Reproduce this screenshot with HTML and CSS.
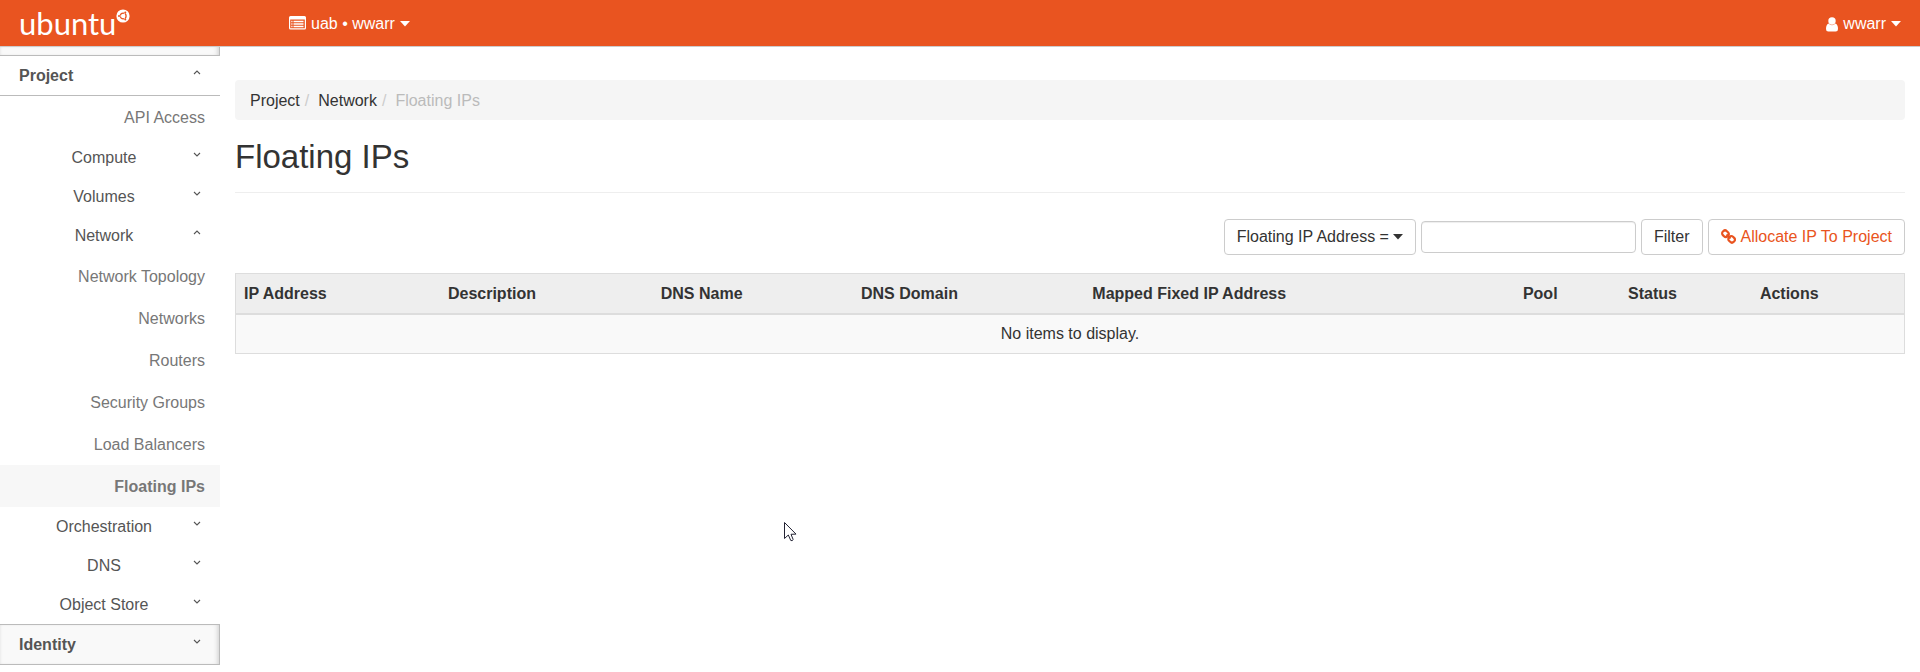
FILE: index.html
```html
<!DOCTYPE html>
<html lang="en">
<head>
<meta charset="utf-8">
<meta name="viewport" content="width=device-width, initial-scale=1">
<title>Floating IPs</title>
<link rel="stylesheet" href="styles.css">
</head>
<body>
<svg class="defs" aria-hidden="true">
  <symbol id="down" viewBox="0 0 8 5"><path d="M1 1l3 3 3-3" fill="none" stroke="currentColor" stroke-width="1.1"/></symbol>
  <symbol id="up" viewBox="0 0 8 5"><path d="M1 4l3-3 3 3" fill="none" stroke="currentColor" stroke-width="1.1"/></symbol>
  <symbol id="caret" viewBox="0 0 10 6"><path d="M0 0h10L5 5.5z" fill="currentColor"/></symbol>
</svg>
<header class="topbar">
  <a class="brand" href="#" aria-label="ubuntu"><span class="wordmark">ubuntu</span><svg class="circle" viewBox="0 0 14 14" aria-hidden="true"><circle cx="7" cy="7" r="6.6" fill="#fff"/><circle cx="7.2" cy="7" r="2.9" fill="none" stroke="#e95420" stroke-width="1.3"/><path d="M7.2 7H2M7.2 7l3-5M7.2 7l3 5" stroke="#fff" stroke-width=".8"/><g fill="#e95420"><circle cx="3" cy="7" r="1"/><circle cx="9.3" cy="3.4" r="1"/><circle cx="9.3" cy="10.6" r="1"/></g></svg></a>
  <button class="menu" type="button"><svg class="list-icon" viewBox="0 0 17 14" aria-hidden="true"><path fill="#fff" fill-rule="evenodd" d="M1.5 0h14Q17 0 17 1.5v10.500Q17 13.500 15.500 13.500h-14Q0 13.500 0 12V1.500Q0 0 1.500 0zM1.200 3.500v8.800h14.600V3.500z"/><path d="M2.300 5.500h1.200M4.500 5.500h10M2.300 8h1.200M4.500 8h10M2.300 10.500h1.200M4.500 10.500h10" stroke="#fff" stroke-width="1.400"/></svg><span>uab • wwarr</span><svg class="caret"><use href="#caret"/></svg></button>
  <button class="menu user" type="button"><svg class="user-icon" viewBox="0 0 12 15" aria-hidden="true"><g fill="#fff"><circle cx="6" cy="4" r="3.700"/><path d="M2.500 6.500Q6 10 9.500 6.500Q12 7.500 12 12q0 2.500-2.300 2.500H2.300Q0 14.500 0 12q0-4.500 2.500-5.500z"/></g></svg><span>wwarr</span><svg class="caret"><use href="#caret"/></svg></button>
</header>
<div class="layout">
  <nav class="sidebar" aria-label="Main">
    <div class="panel-end"></div>
    <button class="panel open" type="button"><span>Project</span><svg class="chevron"><use href="#up"/></svg></button>
    <a class="item" href="#">API Access</a>
    <button class="group" type="button"><span>Compute</span><svg class="chevron"><use href="#down"/></svg></button>
    <button class="group" type="button"><span>Volumes</span><svg class="chevron"><use href="#down"/></svg></button>
    <button class="group" type="button"><span>Network</span><svg class="chevron"><use href="#up"/></svg></button>
    <a class="item" href="#">Network Topology</a>
    <a class="item" href="#">Networks</a>
    <a class="item" href="#">Routers</a>
    <a class="item" href="#">Security Groups</a>
    <a class="item" href="#">Load Balancers</a>
    <a class="item active" href="#" aria-current="page">Floating IPs</a>
    <button class="group" type="button"><span>Orchestration</span><svg class="chevron"><use href="#down"/></svg></button>
    <button class="group" type="button"><span>DNS</span><svg class="chevron"><use href="#down"/></svg></button>
    <button class="group" type="button"><span>Object Store</span><svg class="chevron"><use href="#down"/></svg></button>
    <button class="panel" type="button"><span>Identity</span><svg class="chevron"><use href="#down"/></svg></button>
  </nav>
  <main class="content">
    <ol class="breadcrumb">
      <li><a href="#">Project</a></li>
      <li><a href="#">Network</a></li>
      <li class="current">Floating IPs</li>
    </ol>
    <h1 class="title">Floating IPs</h1>
    <form class="actions">
      <button class="btn filter-field" type="button"><span>Floating IP Address =</span><svg class="caret"><use href="#caret"/></svg></button>
      <input class="search" type="text" aria-label="Filter value">
      <button class="btn" type="button">Filter</button>
      <button class="btn allocate" type="button"><svg class="link-icon" viewBox="0 0 15 15" aria-hidden="true"><g fill="none" stroke="currentColor" stroke-width="2.200"><rect x="1.200" y="1.700" width="6.600" height="5.600" rx="2.500" transform="rotate(45 4.200 4.500)"/><rect x="7.200" y="7.700" width="6.600" height="5.600" rx="2.500" transform="rotate(45 10.800 10.500)"/><path d="M5.500 5.500l4 4"/></g></svg><span>Allocate IP To Project</span></button>
    </form>
    <table class="grid">
      <colgroup><col class="c-ip"><col class="c-desc"><col class="c-name"><col class="c-domain"><col class="c-fixed"><col class="c-pool"><col class="c-status"><col></colgroup>
      <thead><tr><th>IP Address</th><th>Description</th><th>DNS Name</th><th>DNS Domain</th><th>Mapped Fixed IP Address</th><th>Pool</th><th>Status</th><th>Actions</th></tr></thead>
      <tbody><tr><td colspan="8">No items to display.</td></tr></tbody>
    </table>
  </main>
</div>
<svg class="cursor" viewBox="0 0 13 20" aria-hidden="true"><path d="M.5.5v16l3.800-3.500 2.500 5.500q1.500.7 2.400-.9L7 12.300l5-.2z" fill="#fff" stroke="#223"/></svg>
</body>
</html>
```
FILE: styles.css
```css
* { box-sizing: border-box; }
body {
  margin: 0;
  background: #fff;
  color: #333;
  font: 16px/24px "Liberation Sans", Arial, sans-serif;
}
a { color: inherit; text-decoration: none; }
button, input { font: inherit; color: inherit; }
button { cursor: pointer; }
.defs { display: none; }

.topbar {
  display: flex;
  align-items: center;
  height: 47px;
  padding: 0 19px;
  background: #e95420;
  border-bottom: 1px solid #ccc;
  color: #fff;
}
.brand { display: flex; width: 270px; }
.wordmark { font: 31px/38px Lato, sans-serif; }
.circle { width: 14px; height: 14px; margin-top: 5px; }
.menu {
  display: flex;
  align-items: center;
  gap: 5px;
  padding: 2px 0 0;
  border: 0;
  background: none;
}
.user { margin-left: auto; }
.list-icon { width: 17px; height: 14px; margin-bottom: 2px; }
.user-icon { width: 12px; height: 15px; }
.caret { width: 10px; height: 6px; }

.layout { display: flex; }
.sidebar { flex: 0 0 220px; }
.panel-end, .panel {
  border: 0 solid #bbb;
  border-right-width: 1px;
  background: #f9f9f9;
  box-shadow: inset -4px 0 5px -3px #ccc, inset 2px 0 3px -2px #ddd;
}
.panel-end { height: 8px; }
.panel, .group {
  display: flex;
  align-items: center;
  width: 100%;
  padding: 0 18px 0 19px;
}
.panel {
  justify-content: space-between;
  height: 41px;
  border-width: 1px 1px 1px 0;
  color: #555;
  font-weight: bold;
}
.panel.open {
  padding-right: 19px;
  border-right: 0;
  background: #fff;
  box-shadow: none;
}
.group {
  height: 39px;
  padding-right: 19px;
  border: 0;
  background: none;
  color: #555;
}
.group span { flex: 1; }
.group .chevron { margin-left: 4px; }
.chevron { width: 8px; height: 5px; margin-bottom: 7px; }
.item {
  display: block;
  padding: 10px 15px 8px;
  color: #777;
  text-align: right;
}
.item.active { background: #f7f7f7; font-weight: bold; }

.content { flex: 1; min-width: 0; padding: 33px 15px 0; }
.breadcrumb {
  display: flex;
  margin: 0;
  padding: 9px 15px 7px;
  border-radius: 4px;
  background: #f5f5f5;
  list-style: none;
}
.breadcrumb li + li::before { content: "/"; padding: 0 9px 0 5px; color: #ccc; }
.breadcrumb .current { color: #bbb; }
.title {
  margin: 0 0 26px;
  padding: 19px 0 17px;
  border-bottom: 1px solid #eee;
  font-size: 33px;
  font-weight: normal;
  line-height: 36px;
}
.actions {
  display: flex;
  justify-content: flex-end;
  align-items: center;
  gap: 5px;
  margin-bottom: 18px;
}
.btn {
  display: flex;
  align-items: center;
  height: 36px;
  padding: 0 12px;
  border: 1px solid #ccc;
  border-radius: 4px;
  background: #fff;
}
.filter-field { gap: 4px; }
.allocate { gap: 5px; color: #e95420; }
.link-icon { width: 15px; height: 15px; margin-bottom: 2px; }
.search {
  width: 215px;
  height: 32px;
  padding: 0 12px;
  border: 1px solid #ccc;
  border-radius: 4px;
  box-shadow: inset 0 1px 1px #eee;
}

.grid {
  width: 100%;
  border: 1px solid #ddd;
  border-collapse: collapse;
  table-layout: fixed;
}
.grid th {
  padding: 8px 8px 7px;
  border-bottom: 2px solid #ddd;
  background: #eee;
  text-align: left;
}
.grid td { padding: 7px 8px; background: #f9f9f9; text-align: center; }
.c-ip { width: 12.25%; }
.c-desc { width: 12.75%; }
.c-name { width: 12%; }
.c-domain { width: 13.86%; }
.c-fixed { width: 25.8%; }
.c-pool { width: 6.3%; }
.c-status { width: 7.9%; }

.cursor { position: absolute; left: 784px; top: 522px; width: 13px; height: 20px; }
```
